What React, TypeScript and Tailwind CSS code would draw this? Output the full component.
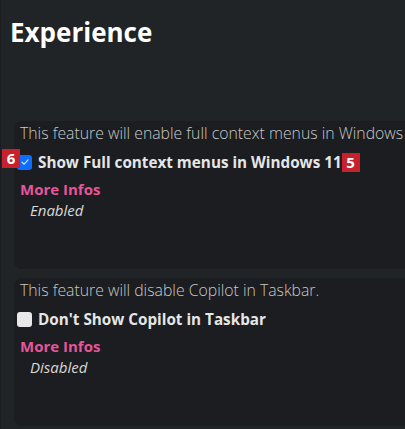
import { useState } from 'react';

interface Tweak {
  id: number;
  description: string;
  label: string;
  enabled: boolean;
  badgeLeft?: string;
  badgeRight?: string;
}

const tweaks: Tweak[] = [
  {
    id: 1,
    description: 'This feature will enable full context menus in Windows 11.',
    label: 'Show Full context menus in Windows 11',
    enabled: true,
    badgeLeft: '6',
    badgeRight: '5',
  },
  {
    id: 2,
    description: 'This feature will disable Copilot in Taskbar.',
    label: "Don't Show Copilot in Taskbar",
    enabled: false,
  },
];

export default function App() {
  const [state, setState] = useState<Record<number, boolean>>(
    Object.fromEntries(tweaks.map((t) => [t.id, t.enabled]))
  );

  return (
    <div
      className="h-[429px] w-[405px] overflow-hidden bg-[#212427] border-l border-[#1a1c1f] text-[#d4d4d4]"
      style={{ fontFamily: '"Open Sans", "Noto Sans", sans-serif' }}
    >
      {/* Header */}
      <h1 className="pl-[9px] pt-[14px] text-[26px] font-bold leading-[36px] text-white">Experience</h1>

      <div className="mt-[71px] flex flex-col gap-[9px] pl-[13px]">
        {tweaks.map((tweak) => (
          <TweakCard
            key={tweak.id}
            tweak={tweak}
            checked={state[tweak.id]}
            onToggle={() => setState((s) => ({ ...s, [tweak.id]: !s[tweak.id] }))}
          />
        ))}
      </div>
    </div>
  );
}

function TweakCard({
  tweak,
  checked,
  onToggle,
}: {
  tweak: Tweak;
  checked: boolean;
  onToggle: () => void;
}) {
  return (
    <div className="relative h-[148px] w-[420px] shrink-0 rounded-l-[8px] bg-[#1b1d20] pl-[6px] pt-[1px]">
      <p className="whitespace-nowrap text-[15.8px] font-light leading-[22px] text-[#c8c8c8]">
        {tweak.description}
      </p>

      <label className="relative mt-[8px] flex h-[20px] cursor-pointer items-center gap-[6px] pl-[3px] -ml-[6px]">
        {tweak.badgeLeft && (
          <span className="absolute left-[-12px] top-[-3px] flex h-[19px] w-[18px] items-center justify-center bg-[#c8202c] text-[15px] font-bold text-white">
            {tweak.badgeLeft}
          </span>
        )}
        <span
          onClick={onToggle}
          className={
            checked
              ? 'flex h-[15px] w-[15px] items-center justify-center rounded-[3px] bg-[#0d6efd]'
              : 'flex h-[15px] w-[15px] items-center justify-center rounded-[3px] bg-[#e8e8e8]'
          }
        >
          {checked && (
            <svg width="10" height="10" viewBox="0 0 10 10" fill="none">
              <path d="M2 5.2 L4.2 7.2 L8 2.8" stroke="#cfe0ff" strokeWidth="1.2" strokeLinecap="round" strokeLinejoin="round" />
            </svg>
          )}
        </span>
        <span className="whitespace-nowrap text-[15.25px] font-bold text-[#e6e6e6]">{tweak.label}</span>
        {tweak.badgeRight && (
          <span className="-ml-[6px] flex h-[19px] w-[18px] items-center justify-center bg-[#c8202c] text-[15px] font-bold text-white">
            {tweak.badgeRight}
          </span>
        )}
      </label>

      <div className="mt-[7px] text-[15px] font-bold leading-[20px] text-[#e6559a]">More Infos</div>
      <div className="pl-[10px] text-[15px] italic leading-[22px] text-[#d8d8d8]">
        {checked ? 'Enabled' : 'Disabled'}
      </div>
    </div>
  );
}
